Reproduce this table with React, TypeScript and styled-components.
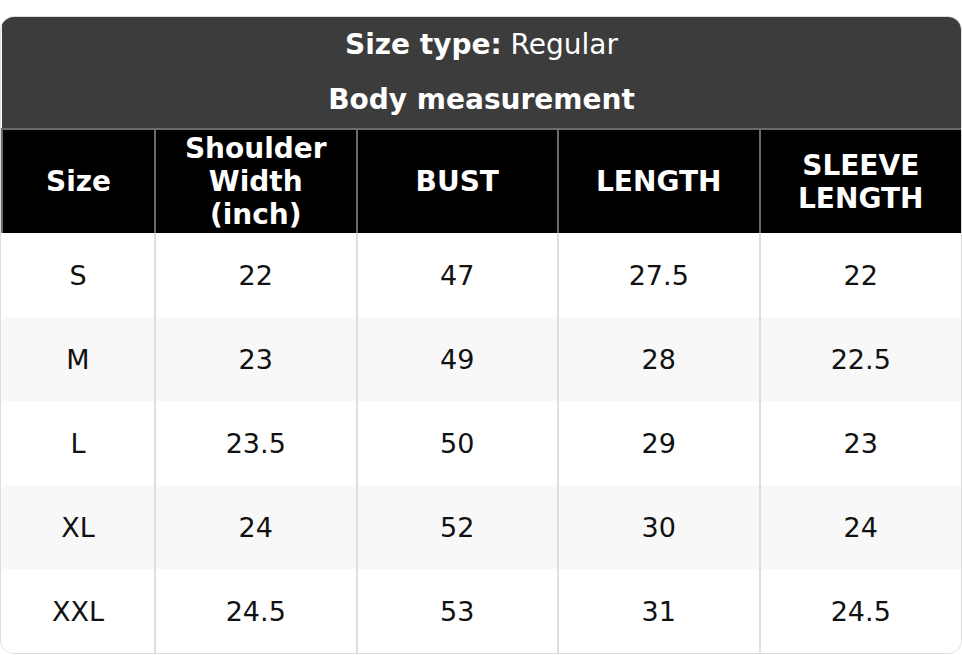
import styled, { createGlobalStyle } from "styled-components";

const GlobalStyle = createGlobalStyle`
  body {
    margin: 0;
    padding-top: 16px;
    background: #ffffff;
    font-family: "DejaVu Sans", "Liberation Sans", sans-serif;
  }
`;

const TableWrap = styled.div`
  width: 962px;
  border: 1px solid #dcdcdc;
  border-radius: 14px;
  overflow: hidden;
  box-sizing: border-box;
`;

const Table = styled.table`
  width: 100%;
  border-collapse: collapse;
  table-layout: fixed;
`;

const TitleCell = styled.th<{ $top?: boolean }>`
  background: #3c3c3c;
  color: #ffffff;
  font-size: 28px;
  font-weight: 400;
  text-align: center;
  line-height: 33px;
  padding: ${(p) => (p.$top ? "11px 0 11px" : "11px 0 12px")};
  border-bottom: ${(p) => (p.$top ? "none" : "2px solid #6a6a6a")};
`;

const Bold = styled.b`
  font-weight: 700;
`;

const HeadCell = styled.th`
  background: #000000;
  color: #ffffff;
  font-size: 28px;
  font-weight: 700;
  text-align: center;
  line-height: 33px;
  padding: 2px 12px;
  height: 99px;
  border-left: 2px solid #6a6a6a;
`;

const Row = styled.tr<{ $alt: boolean }>`
  background: ${(p) => (p.$alt ? "#f8f8f8" : "#ffffff")};
`;

const Cell = styled.td`
  color: #111111;
  font-size: 27px;
  text-align: center;
  line-height: 33px;
  height: 84px;
  padding: 0;
  box-sizing: border-box;
  border-left: 2px solid #dedede;

  &:first-child {
    border-left: none;
  }
`;

const headers = [
  "Size",
  "Shoulder Width (inch)",
  "BUST",
  "LENGTH",
  "SLEEVE LENGTH",
];

const rows = [
  ["S", "22", "47", "27.5", "22"],
  ["M", "23", "49", "28", "22.5"],
  ["L", "23.5", "50", "29", "23"],
  ["XL", "24", "52", "30", "24"],
  ["XXL", "24.5", "53", "31", "24.5"],
];

const App = () => {
  return (
    <>
      <GlobalStyle />
      <TableWrap>
        <Table>
          <colgroup>
            <col style={{ width: 153 }} />
            <col />
            <col />
            <col />
            <col />
          </colgroup>
          <thead>
            <tr>
              <TitleCell colSpan={5} $top>
                <Bold>Size type:</Bold> Regular
              </TitleCell>
            </tr>
            <tr>
              <TitleCell colSpan={5}>
                <Bold>Body measurement</Bold>
              </TitleCell>
            </tr>
            <tr>
              {headers.map((h) => (
                <HeadCell key={h}>{h}</HeadCell>
              ))}
            </tr>
          </thead>
          <tbody>
            {rows.map((r, i) => (
              <Row key={r[0]} $alt={i % 2 === 1}>
                {r.map((v, j) => (
                  <Cell key={j}>{v}</Cell>
                ))}
              </Row>
            ))}
          </tbody>
        </Table>
      </TableWrap>
    </>
  );
};

export default App;
